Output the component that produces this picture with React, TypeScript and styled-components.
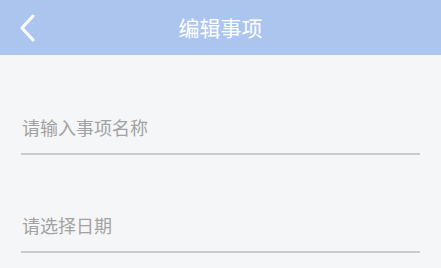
import styled, { createGlobalStyle } from "styled-components";

const GlobalStyle = createGlobalStyle`
  html, body {
    margin: 0;
    padding: 0;
    background: #f5f6f8;
  }
  body {
    font-family: "Noto Sans CJK SC", "Noto Sans", sans-serif;
  }
`;

const Page = styled.div`
  width: 441px;
  height: 268px;
  background: #f5f6f8;
  overflow: hidden;
`;

const Header = styled.header`
  height: 55px;
  background: #abc5ef;
  display: grid;
  grid-template-columns: 60px 1fr 60px;
  align-items: center;
`;

const BackButton = styled.button`
  border: none;
  background: none;
  padding: 0 0 0 19px;
  height: 55px;
  display: flex;
  align-items: center;
  cursor: pointer;
`;

const Title = styled.h1`
  margin: 0;
  text-align: center;
  font-size: 21px;
  font-weight: 400;
  color: #ffffff;
  line-height: 1;
  padding-bottom: 1px;
`;

const Form = styled.div`
  display: flex;
  flex-direction: column;
  gap: 44px;
  padding: 46px 21px 0;
`;

const Field = styled.div`
  height: 52px;
  display: flex;
  align-items: center;
  border-bottom: 2px solid #cacaca;
`;

const Input = styled.input`
  flex: 1;
  border: none;
  outline: none;
  background: transparent;
  padding: 0 1px;
  font-family: "Noto Sans CJK SC", "Noto Sans", sans-serif;
  font-size: 18px;
  color: #333;
  &::placeholder {
    color: #a2a2a2;
  }
`;

const App = () => {
  return (
    <Page>
      <GlobalStyle />
      <Header>
        <BackButton aria-label="返回">
          <svg width="16" height="28" viewBox="0 0 16 28">
            <path
              d="M14 2 L3 14 L14 26"
              fill="none"
              stroke="#ffffff"
              strokeWidth="3"
              strokeLinecap="round"
              strokeLinejoin="round"
            />
          </svg>
        </BackButton>
        <Title>编辑事项</Title>
        <div />
      </Header>
      <Form>
        <Field>
          <Input placeholder="请输入事项名称" />
        </Field>
        <Field>
          <Input placeholder="请选择日期" readOnly />
        </Field>
      </Form>
    </Page>
  );
};

export default App;
